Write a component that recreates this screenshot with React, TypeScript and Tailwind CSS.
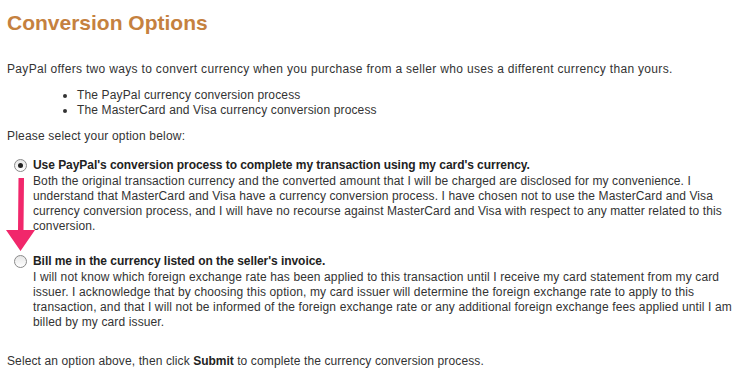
import React from "react";

function Radio({ checked }: { checked: boolean }) {
  return (
    <span className="mt-[1px] flex h-[13px] w-[13px] items-center justify-center rounded-full border border-[#8a8a8a] bg-gradient-to-b from-[#e6e6e6] to-white">
      {checked && <span className="h-[5px] w-[5px] rounded-full bg-[#222]" />}
    </span>
  );
}

export default function App() {
  return (
    <div
      className="relative h-[379px] w-[753px] overflow-hidden bg-white px-[7px] text-[12px] leading-[15px] text-[#333]"
      style={{ fontFamily: '"Liberation Sans", Arial, sans-serif' }}
    >
      <h1 className="pt-[11px] text-[21px] font-bold leading-[24px] text-[#c5813f]">Conversion Options</h1>
      <p className="mt-[27px] tracking-[0.32px]">
        PayPal offers two ways to convert currency when you purchase from a seller who uses a different currency than yours.
      </p>
      <ul className="mt-[11px] list-disc pl-[70px] tracking-[0.14px]">
        <li>The PayPal currency conversion process</li>
        <li>The MasterCard and Visa currency conversion process</li>
      </ul>
      <p className="mt-[11px] tracking-[0.19px]">Please select your option below:</p>

      <div className="mt-[13px] flex">
        <div className="flex w-[26px] justify-center pt-[1px]">
          <Radio checked />
        </div>
        <div className="flex-1">
          <div className="font-bold leading-[17px] tracking-[-0.05px] text-[#222]">
            Use PayPal's conversion process to complete my transaction using my card's currency.
          </div>
          <div className="tracking-[0.1px]">
            Both the original transaction currency and the converted amount that I will be charged are disclosed for my convenience. I understand that MasterCard and Visa have a currency conversion process. I have chosen not to use the MasterCard and Visa currency conversion process, and I will have no recourse against MasterCard and Visa with respect to any matter related to this conversion.
          </div>
        </div>
      </div>

      <div className="mt-[19px] flex">
        <div className="flex w-[26px] justify-center pt-[1px]">
          <Radio checked={false} />
        </div>
        <div className="flex-1">
          <div className="font-bold leading-[17px] tracking-[-0.05px] text-[#222]">Bill me in the currency listed on the seller's invoice.</div>
          <div className="tracking-[0.13px]">
            I will not know which foreign exchange rate has been applied to this transaction until I receive my card statement from my card issuer. I acknowledge that by choosing this option, my card issuer will determine the foreign exchange rate to apply to this transaction, and that I will not be informed of the foreign exchange rate or any additional foreign exchange fees applied until I am billed by my card issuer.
          </div>
        </div>
      </div>

      <p className="mt-[24px] tracking-[0.12px]">
        Select an option above, then click <b className="tracking-[-0.05px] text-[#222]">Submit</b> to complete the currency conversion process.
      </p>

      <svg className="pointer-events-none absolute left-0 top-0" width="753" height="379" viewBox="0 0 753 379">
        <polygon points="18.5,178 24,178 23.5,230 35,230 20.5,251 6,230 18,230" fill="#f1276b" />
      </svg>
    </div>
  );
}
